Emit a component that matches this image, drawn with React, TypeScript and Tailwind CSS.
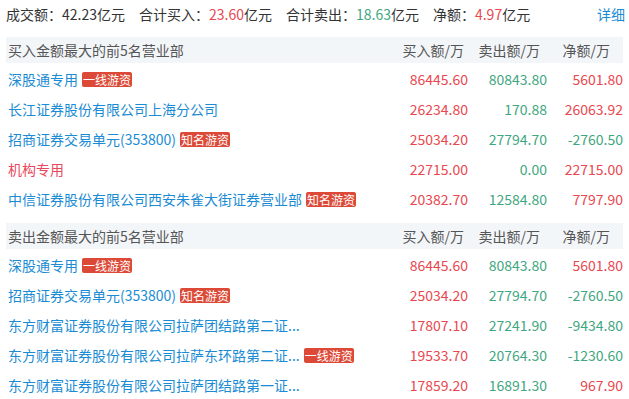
const RED = "text-[#e9474f]";
const GREEN = "text-[#3fa77f]";

type Row = {
  name: string;
  tag?: string;
  inst?: boolean;
  buy: string;
  sell: string;
  net: string;
};

const buyTop: Row[] = [
  { name: "深股通专用", tag: "一线游资", buy: "86445.60", sell: "80843.80", net: "5601.80" },
  { name: "长江证券股份有限公司上海分公司", buy: "26234.80", sell: "170.88", net: "26063.92" },
  { name: "招商证券交易单元(353800)", tag: "知名游资", buy: "25034.20", sell: "27794.70", net: "-2760.50" },
  { name: "机构专用", inst: true, buy: "22715.00", sell: "0.00", net: "22715.00" },
  { name: "中信证券股份有限公司西安朱雀大街证券营业部", tag: "知名游资", buy: "20382.70", sell: "12584.80", net: "7797.90" },
];

const sellTop: Row[] = [
  { name: "深股通专用", tag: "一线游资", buy: "86445.60", sell: "80843.80", net: "5601.80" },
  { name: "招商证券交易单元(353800)", tag: "知名游资", buy: "25034.20", sell: "27794.70", net: "-2760.50" },
  { name: "东方财富证券股份有限公司拉萨团结路第二证...", buy: "17807.10", sell: "27241.90", net: "-9434.80" },
  { name: "东方财富证券股份有限公司拉萨东环路第二证...", tag: "一线游资", buy: "19533.70", sell: "20764.30", net: "-1230.60" },
  { name: "东方财富证券股份有限公司拉萨团结路第一证...", buy: "17859.20", sell: "16891.30", net: "967.90" },
];

function Section({ title, rows }: { title: string; rows: Row[] }) {
  return (
    <div className="flex flex-col">
      <div className="flex h-[26px] items-center bg-[#f3f6f9] pl-[2px] text-[#555] mb-px">
        <div className="flex-1">{title}</div>
        <div className="w-[79px] text-right pr-[4px]">买入额/万</div>
        <div className="w-[79px] text-right pr-[7px]">卖出额/万</div>
        <div className="w-[76px] text-right pr-[13px]">净额/万</div>
      </div>
      {rows.map((r, i) => (
        <div key={i} className="flex h-[30px] items-center pl-[2px]">
          <div className="flex flex-1 items-center gap-[4px] min-w-0">
            <span className={r.inst ? "text-[#e9475c]" : "text-[#1b8cd3]"}>{r.name}</span>
            {r.tag && (
              <span className="rounded-[2px] bg-[#dc4a37] px-px text-[12px] leading-[15px] text-white">
                {r.tag}
              </span>
            )}
          </div>
          <div className={`w-[79px] text-right ${RED}`}>{r.buy}</div>
          <div className={`w-[79px] text-right ${GREEN}`}>{r.sell}</div>
          <div className={`w-[76px] text-right ${r.net.startsWith("-") ? GREEN : RED}`}>{r.net}</div>
        </div>
      ))}
    </div>
  );
}

export default function App() {
  return (
    <div className="w-[629px] h-[399px] overflow-hidden bg-white px-[6px] text-[14px] text-[#333] font-['Noto_Sans_CJK_SC','Noto_Sans',sans-serif]">
      <div className="flex h-[28px] items-center mb-[9px]">
        <div className="flex flex-1 items-center gap-[14px]">
          <span>
            成交额：42.23亿元
          </span>
          <span>
            合计买入：<span className={RED}>23.60</span>亿元
          </span>
          <span>
            合计卖出：<span className={GREEN}>18.63</span>亿元
          </span>
          <span>
            净额：<span className={RED}>4.97</span>亿元
          </span>
        </div>
        <span className="text-[#1b8cd3] -mr-[2px]">详细</span>
      </div>
      <Section title="买入金额最大的前5名营业部" rows={buyTop} />
      <div className="h-[9px]" />
      <Section title="卖出金额最大的前5名营业部" rows={sellTop} />
    </div>
  );
}
